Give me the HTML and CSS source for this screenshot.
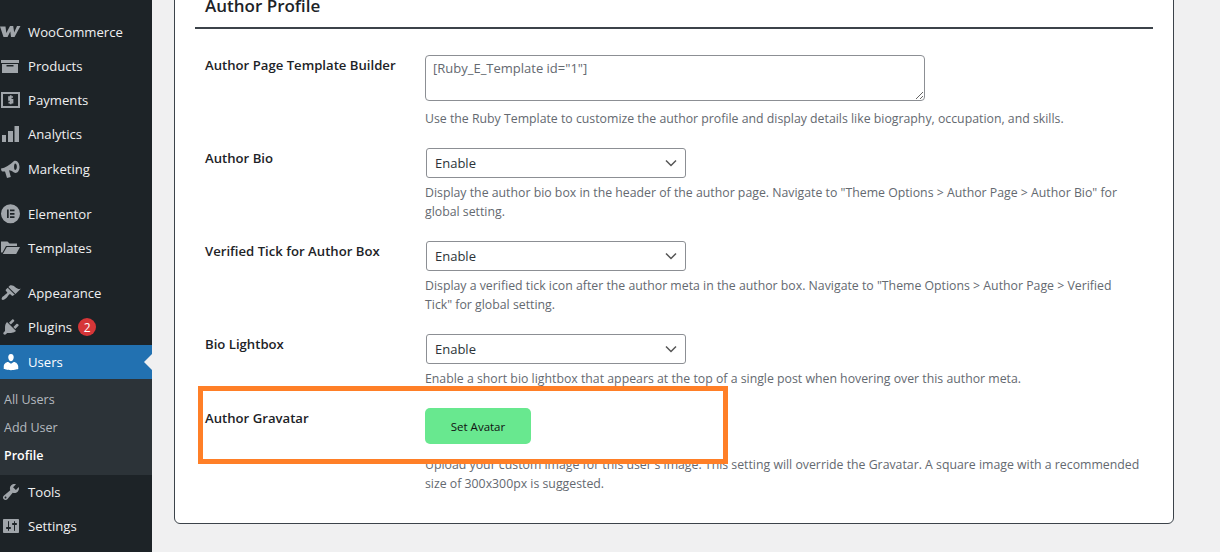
FILE: index.html
```html
<!DOCTYPE html>
<html lang="en">
<head>
<meta charset="utf-8">
<title>Profile</title>
<link rel="stylesheet" href="styles.css">
</head>
<body>
<div class="shell">
  <nav class="sidebar">
    <ul class="menu">
      <li class="item"><svg class="icon" viewBox="0 0 20 20"><path d="M-1 4.500h5.500l.8 6.500 3.700-7h3.200l1 6.500 2.800-6.500h3.500L13.500 15H10l-.7-5.500L6.500 15h-4z"/></svg><span>WooCommerce</span></li>
      <li class="item"><svg class="icon" viewBox="0 0 20 20"><path fill-rule="evenodd" d="M0 4h18v3H0zM1 8h16v9H1zM5.500 9v1.500h7V9z"/></svg><span>Products</span></li>
      <li class="item"><svg class="icon" viewBox="0 0 20 20"><path fill-rule="evenodd" d="M0 2h19v16H0zM2 4v12h15V4z"/><path class="cut" d="M12 7H8v2.800h3.500v2.900H7.500M9.700 5.300v9"/></svg><span>Payments</span></li>
      <li class="item"><svg class="icon" viewBox="0 0 20 20"><path d="M1 11h4v7H1zM7 7h5v11H7zM13.500 2H18v16h-4.500z"/></svg><span>Analytics</span></li>
      <li class="item mkt"><svg class="icon" viewBox="0 0 20 20"><path fill-rule="evenodd" d="M0 9.500C4 9 9 6 13 2c3-1.500 5.500 2 5.500 6s-2.500 7-5.500 5.500C11 12 9.500 11.500 8 11.300L9.800 18 6 19l-2-6.500H1.500C.5 12.500 0 11 0 9.500zM14 4.500c-1.200.5-1.200 6 0 6.500 2.500 0 2.500-6.500 0-6.500z"/></svg><span>Marketing</span></li>
      <li class="item sep"><svg class="icon" viewBox="0 0 20 20"><path fill-rule="evenodd" d="M9.500 .3a9.500 9.500 0 1 0 0 19 9.500 9.500 0 0 0 0-19zM6 5.500h1.700v8.500H6zM9 5.500h4.500v1.700H9zM9 9h4.500v1.700H9zM9 12.300h4.500V14H9z"/></svg><span>Elementor</span></li>
      <li class="item"><svg class="icon" viewBox="0 0 20 20"><path d="M0 3.500h6.500l2 2H16V8H5L1.500 14.500H0zM5.800 9H19l-3.800 7H1.800z"/></svg><span>Templates</span></li>
      <li class="item sep"><svg class="icon" viewBox="0 0 20 20"><path d="M14.480 11.060L7.410 3.990l1.500-1.500c.5-.56 2.300-.47 3.510.32 1.210.8 1.430 1.280 2.910 2.100 1.180.64 2.450 1.260 4.450.85zm-.71.71L6.700 4.700 4.930 6.470c-.39.39-.39 1.020 0 1.410l1.060 1.060c.39.39.39 1.030 0 1.420-.6.6-1.430 1.110-2.210 1.690-.35.26-.7.53-1.010.84C1.430 13.230 0 15.660.93 16.590c.94.93 3.370-.5 4.710-1.840.31-.31.57-.66.84-1.010.58-.78 1.090-1.610 1.690-2.210.39-.39 1.030-.39 1.420 0l1.060 1.060c.39.39 1.020.39 1.410 0z"/></svg><span>Appearance</span></li>
      <li class="item"><svg class="icon" viewBox="0 0 20 20"><path d="M13.110 4.360L9.870 7.600 8 5.730l3.240-3.240c.35-.34 1.050-.2 1.560.32.52.51.66 1.210.31 1.550zm-8 1.770l.91-1.120 9.010 9.010-1.190.84c-.71.71-2.630 1.160-3.820 1.160H6.140L4.900 17.260c-.59.59-1.540.59-2.120 0-.59-.58-.59-1.530 0-2.120l1.240-1.240v-3.880c0-1.130.4-3.190 1.090-3.890zm7.260 3.970l3.240-3.240c.34-.35 1.040-.21 1.550.31.52.51.66 1.210.31 1.550l-3.240 3.250z"/></svg><span>Plugins</span><b class="badge">2</b></li>
      <li class="item current"><svg class="icon" viewBox="0 0 20 20"><path d="M10 9.250c-2.270 0-2.730-3.440-2.730-3.440C7 4.020 7.820 2 9.970 2c2.160 0 2.980 2.020 2.710 3.810 0 0-.41 3.440-2.680 3.440zm0 2.570L12.720 10c2.390 0 4.520 2.330 4.520 4.530v2.490s-3.650 1.130-7.240 1.130c-3.650 0-7.240-1.130-7.240-1.130v-2.490c0-2.250 1.940-4.480 4.470-4.480z"/></svg><span>Users</span></li>
      <li class="submenu">
        <a class="subitem">All Users</a>
        <a class="subitem">Add User</a>
        <a class="subitem active">Profile</a>
      </li>
      <li class="item"><svg class="icon" viewBox="0 0 20 20"><path d="M16.680 9.770c-1.340 1.340-3.300 1.670-4.950.99l-5.410 6.520c-.99.99-2.590.99-3.580 0s-.99-2.590 0-3.570l6.520-5.420c-.68-1.650-.35-3.610.99-4.950 1.280-1.280 3.120-1.620 4.720-1.060l-2.890 2.890 2.820 2.820 2.860-2.870c.53 1.580.18 3.390-1.080 4.650zM3.810 16.210c.4.39 1.040.39 1.430 0 .4-.4.4-1.040 0-1.430-.39-.4-1.030-.4-1.430 0-.39.39-.39 1.030 0 1.430z"/></svg><span>Tools</span></li>
      <li class="item"><svg class="icon" viewBox="0 0 20 20"><path d="M18 16V4c0-.55-.45-1-1-1H3c-.55 0-1 .45-1 1v12c0 .55.45 1 1 1h14c.55 0 1-.45 1-1zM8 11h1c.55 0 1 .45 1 1s-.45 1-1 1H8v1.500c0 .28-.22.5-.5.5s-.5-.22-.5-.5V13H6c-.55 0-1-.45-1-1s.45-1 1-1h1V5.500c0-.28.22-.5.5-.5s.5.22.5.5V11zm5-2h-1c-.55 0-1-.45-1-1s.45-1 1-1h1V5.500c0-.28.22-.5.5-.5s.5.22.5.5V7h1c.55 0 1 .45 1 1s-.45 1-1 1h-1v5.500c0 .28-.22.5-.5.5s-.5-.22-.5-.5V9z"/></svg><span>Settings</span></li>
    </ul>
  </nav>
  <main class="main">
    <section class="card">
      <h2 class="card-title">Author Profile</h2>
      <div class="rows">
        <div class="row">
          <label class="label">Author Page Template Builder</label>
          <div class="field">
            <textarea class="area" rows="2">[Ruby_E_Template id="1"]</textarea>
            <p class="desc">Use the Ruby Template to customize the author profile and display details like biography, occupation, and skills.</p>
          </div>
        </div>
        <div class="row">
          <label class="label">Author Bio</label>
          <div class="field">
            <select class="choice"><option>Enable</option></select>
            <p class="desc">Display the author bio box in the header of the author page. Navigate to "Theme Options &gt; Author Page &gt; Author Bio" for global setting.</p>
          </div>
        </div>
        <div class="row">
          <label class="label">Verified Tick for Author Box</label>
          <div class="field">
            <select class="choice"><option>Enable</option></select>
            <p class="desc">Display a verified tick icon after the author meta in the author box. Navigate to "Theme Options &gt; Author Page &gt; Verified Tick" for global setting.</p>
          </div>
        </div>
        <div class="row">
          <label class="label">Bio Lightbox</label>
          <div class="field">
            <select class="choice"><option>Enable</option></select>
            <p class="desc">Enable a short bio lightbox that appears at the top of a single post when hovering over this author meta.</p>
          </div>
        </div>
        <div class="row">
          <label class="label">Author Gravatar</label>
          <div class="field">
            <button class="avatar-btn" type="button">Set Avatar</button>
            <p class="desc desc-upload">Upload your custom image for this user's image. This setting will override the Gravatar. A square image with a recommended size of 300x300px is suggested.</p>
          </div>
        </div>
      </div>
    </section>
    <div class="highlight"></div>
  </main>
</div>
</body>
</html>
```

FILE: styles.css
```css
* { box-sizing: border-box; }
html, body { margin: 0; height: 100%; overflow: hidden; }
body {
  font-family: "Open Sans", "Noto Sans", sans-serif;
  font-size: 13px;
  background: #f0f0f1;
  color: #3c434a;
}
.shell { display: flex; height: 552px; overflow: hidden; }

.sidebar { width: 152px; flex: none; background: #1d2327; padding-top: 15px; }
.menu { list-style: none; margin: 0; padding: 0; }
.item {
  display: flex;
  align-items: center;
  height: 34px;
  padding-left: 1px;
  color: #f0f0f1;
  font-size: 13.150px;
  position: relative;
}
.item.mkt { margin-top: 1px; }
.item.sep { margin-top: 11px; }
.icon { width: 20px; height: 20px; flex: none; margin-right: 7px; fill: #a0a5aa; overflow: visible; }
.cut { fill: none; stroke: #a0a5aa; stroke-width: 1.700; }
.badge {
  width: 18px;
  height: 18px;
  margin-left: 6px;
  border-radius: 50%;
  background: #d63638;
  color: #fff;
  font-size: 12px;
  font-weight: 400;
  display: flex;
  align-items: center;
  justify-content: center;
}
.current { background: #2271b1; color: #fff; margin-top: 1px; }
.current .icon { fill: #fff; }
.current::after {
  content: "";
  position: absolute;
  right: 0;
  top: 50%;
  margin-top: -8px;
  border: 8px solid transparent;
  border-left-width: 0;
  border-right-color: #f0f0f1;
}
.submenu { background: #2c3338; display: flex; flex-direction: column; height: 96px; padding: 6px 0 6px 4px; }
.subitem { height: 28px; line-height: 30px; font-size: 12.500px; color: rgba(240, 246, 252, .7); }
.subitem.active { color: #fff; font-weight: 600; }

.main { flex: 1; position: relative; padding: 0 46px 0 22px; min-width: 0; }
.card {
  margin-top: -20px;
  height: 544px;
  background: #fff;
  border: 1px solid #3c434a;
  border-radius: 6px;
  padding: 0 20px 30px;
}
.card-title {
  margin: 0;
  height: 48px;
  padding: 13px 10px 0;
  font-size: 17px;
  line-height: 24px;
  font-weight: 600;
  color: #1d2327;
  border-bottom: 2px solid #3c434a;
}
.rows { display: flex; flex-direction: column; gap: 20px; padding: 26px 0 0 10px; }
.row { display: grid; grid-template-columns: 220px 716px; }
.label { font-size: 13.150px; font-weight: 600; color: #1d2327; line-height: 20px; }
.field { min-width: 0; }
.area {
  display: block;
  width: 500px;
  height: 46px;
  border: 1px solid #8c8f94;
  border-radius: 4px;
  padding: 2px 7px;
  font: 13px/20px "Open Sans", sans-serif;
  color: #646970;
  background: #fff;
}
.choice {
  display: block;
  width: 260px;
  height: 30px;
  margin-left: 1px;
  border: 1px solid #8c8f94;
  border-radius: 3px;
  padding: 0 24px 0 8px;
  font: 13px "Open Sans", sans-serif;
  color: #2c3338;
  appearance: none;
  background: #fff url("data:image/svg+xml,%3Csvg xmlns='http://www.w3.org/2000/svg' width='12' height='8'%3E%3Cpath d='M1 1.500l5 5 5-5' fill='none' stroke='%23555' stroke-width='1.500'/%3E%3C/svg%3E") no-repeat right 8px center;
}
.desc { margin: 5px 0 0; font-size: 12.300px; line-height: 19px; color: #646970; }
.area + .desc { margin-top: 8px; }
.desc-upload { margin-top: 11px; }
.avatar-btn {
  display: block;
  width: 106px;
  height: 36px;
  border: 0;
  border-radius: 5px;
  background: #68e88f;
  color: #111;
  font: 500 11.500px "Open Sans", sans-serif;
}
.highlight {
  position: absolute;
  left: 46px;
  top: 386px;
  width: 530px;
  height: 78px;
  border: 5px solid #ff7f27;
  pointer-events: none;
}
```
